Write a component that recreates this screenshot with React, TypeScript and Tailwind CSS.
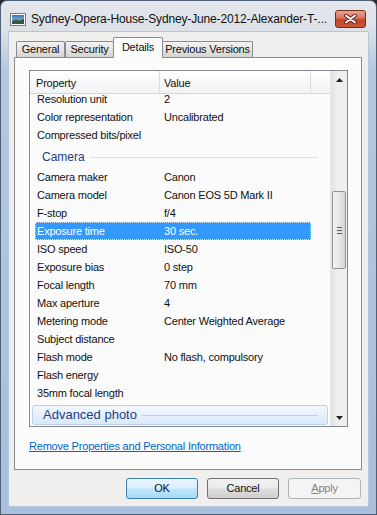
import React from "react";

const general = [
  ["Resolution unit", "2"],
  ["Color representation", "Uncalibrated"],
  ["Compressed bits/pixel", ""],
];

const camera = [
  ["Camera maker", "Canon"],
  ["Camera model", "Canon EOS 5D Mark II"],
  ["F-stop", "f/4"],
  ["Exposure time", "30 sec."],
  ["ISO speed", "ISO-50"],
  ["Exposure bias", "0 step"],
  ["Focal length", "70 mm"],
  ["Max aperture", "4"],
  ["Metering mode", "Center Weighted Average"],
  ["Subject distance", ""],
  ["Flash mode", "No flash, compulsory"],
  ["Flash energy", ""],
  ["35mm focal length", ""],
];

const Row = ({ label, value, selected }: { label: string; value: string; selected?: boolean }) => (
  <div
    className={
      selected
        ? "h-[18px] ml-[5px] w-[276px] flex items-center bg-[#3399ff] text-white border border-dotted border-[#cfe3fb]"
        : "h-[18px] ml-[5px] w-[276px] flex items-center border border-transparent"
    }
  >
    <div className="w-[124px] pl-[1px] whitespace-nowrap">{label}</div>
    <div className="pl-[4px] whitespace-nowrap">{value}</div>
  </div>
);

const Tab = ({ label, active, w }: { label: string; active?: boolean; w: string }) =>
  active ? (
    <div
      className={`${w} h-[21px] -mx-[1px] relative z-10 border border-b-0 border-[#898c95] bg-[#fcfcfc] flex items-center justify-center rounded-t-[2px] mb-[-1px] pb-[2px]`}
    >
      {label}
    </div>
  ) : (
    <div
      className={`${w} h-[16px] border border-b-0 border-[#898c95] bg-gradient-to-b from-[#f3f3f3] to-[#d6d4d0] flex items-center justify-center rounded-t-[2px]`}
    >
      {label}
    </div>
  );

export default function App() {
  return (
    <div className="w-[377px] h-[515px] bg-[#2b2b2b] overflow-hidden font-['Liberation_Sans',Arial,sans-serif] text-[11px] tracking-[-0.2px] text-[#111]">
      <div className="h-full rounded-t-[7px] border border-[#4f6078] bg-[linear-gradient(to_bottom,#e4e7eb_0px,#dde2e8_28px,#b3c7de_70px,#a8c0dc_100%)] flex flex-col px-[7px] pb-[7px]">
        {/* title bar */}
        <div className="h-[30px] flex items-center shrink-0 pt-[6px]">
          <svg width="16" height="13" viewBox="0 0 16 13" className="ml-[2px]">
            <defs>
              <linearGradient id="sky" x1="0" y1="0" x2="0" y2="1">
                <stop offset="0" stopColor="#3d78b4" />
                <stop offset="1" stopColor="#a9d1ee" />
              </linearGradient>
            </defs>
            <rect x="0.5" y="0.5" width="15" height="12" fill="#fff" stroke="#6f7c8a" />
            <rect x="2" y="2" width="12" height="9" fill="url(#sky)" />
            <path d="M2 8 L6 6.5 L9 7.5 L14 6 L14 11 L2 11 Z" fill="#2f5b3c" />
          </svg>
          <div className="ml-[5px] text-[12px] tracking-[-0.15px] text-[#111] whitespace-nowrap">
            Sydney-Opera-House-Sydney-June-2012-Alexander-T-...
          </div>
          <div className="ml-auto mr-[3px] mt-[-1px] w-[31px] h-[18px] rounded-[3px] border border-[#7a2a1a] bg-[linear-gradient(to_bottom,#e8a493_0%,#d8705a_45%,#c0442a_55%,#c9583c_100%)] flex items-center justify-center">
            <svg width="13" height="10" viewBox="0 0 13 10">
              <path d="M2 1.5 L11 8.5 M11 1.5 L2 8.5" stroke="#5a1d12" strokeWidth="3.6" strokeLinecap="round" />
              <path d="M2 1.5 L11 8.5 M11 1.5 L2 8.5" stroke="#fff" strokeWidth="2" strokeLinecap="round" />
            </svg>
          </div>
        </div>

        {/* client area */}
        <div className="flex-1 bg-[#f0efed] border border-[#b4c6db] flex flex-col pl-[5px] pr-[6px] pt-[4px]">
          {/* tabs */}
          <div className="flex items-end h-[21px] pl-[2px]">
            <Tab label="General" w="w-[49px]" />
            <Tab label="Security" w="w-[49px]" />
            <Tab label="Details" w="w-[50px]" active />
            <Tab label="Previous Versions" w="w-[91px]" />
          </div>

          {/* panel */}
          <div className="h-[413px] border border-[#898c95] bg-[#fcfcfc] flex flex-col pl-[14px] pr-[13px] pt-[12px]">
            {/* list view */}
            <div className="h-[357px] border border-[#828790] bg-[#fbfbfb] flex">
              <div className="flex-1 flex flex-col overflow-hidden">
                {/* header */}
                <div className="h-[23px] shrink-0 flex relative z-10 bg-gradient-to-b from-[#ffffff] to-[#f1f2f4] border-b border-[#d5d5d5]">
                  <div className="w-[130px] pl-[6px] pt-[3px] flex items-center border-r border-[#dcdcdc]">Property</div>
                  <div className="w-[151px] pl-[4px] pt-[3px] flex items-center border-r border-[#dcdcdc]">Value</div>
                </div>
                {/* rows */}
                <div className="-mt-[4px]">
                  {general.map(([l, v]) => (
                    <Row key={l} label={l} value={v} />
                  ))}
                  <div className="h-[24px] flex items-center pl-[12px] pt-[2px]">
                    <span className="text-[#1e3c8c] text-[12px] tracking-[0px]">Camera</span>
                    <div className="flex-1 h-px bg-[#dedfe2] ml-[5px] mr-[12px]" />
                  </div>
                  {camera.map(([l, v]) => (
                    <Row key={l} label={l} value={v} selected={l === "Exposure time"} />
                  ))}
                  <div className="h-[24px] pt-[3px] pb-[1px] px-[2px]">
                    <div className="h-full rounded-[3px] border border-[#b9d1ee] bg-gradient-to-b from-[#f3f8fe] to-[#dae8f9] flex items-center pl-[10px]">
                      <span className="text-[#1e3c8c] text-[13px] tracking-[0px]">Advanced photo</span>
                      <div className="flex-1 h-px bg-[#c3cfdd] ml-[5px] mr-[9px]" />
                    </div>
                  </div>
                </div>
              </div>

              {/* scrollbar */}
              <div className="w-[17px] shrink-0 flex flex-col bg-[linear-gradient(to_right,#e2e2e2,#efefef_40%,#f0f0f0)] border-l border-[#e8e8e8]">
                <div className="h-[17px] flex items-center justify-center">
                  <svg width="7" height="4" viewBox="0 0 7 4">
                    <polygon points="3.5,0 7,4 0,4" fill="#222" />
                  </svg>
                </div>
                <div className="h-[103px]" />
                <div className="h-[78px] mx-[1px] rounded-[2px] border border-[#959595] bg-[linear-gradient(to_right,#f3f3f3,#e6e6e6_50%,#d4d4d4)] flex flex-col items-center justify-center gap-[2px]">
                  <div className="w-[5px] h-px bg-[#5d5d5d]" />
                  <div className="w-[5px] h-px bg-[#5d5d5d]" />
                  <div className="w-[5px] h-px bg-[#5d5d5d]" />
                </div>
                <div className="flex-1" />
                <div className="h-[17px] flex items-center justify-center">
                  <svg width="7" height="4" viewBox="0 0 7 4">
                    <polygon points="0,0 7,0 3.5,4" fill="#222" />
                  </svg>
                </div>
              </div>
            </div>

            <div className="mt-[11px] text-[#0066cc] underline whitespace-nowrap">
              Remove Properties and Personal Information
            </div>
          </div>

          {/* buttons */}
          <div className="flex justify-end gap-[9px] mt-[8px] pr-[1px]">
            <div className="w-[72px] h-[21px] rounded-[3px] border border-[#3c7fb1] bg-[linear-gradient(to_bottom,#eaf6fd_0%,#d9f0fc_45%,#bee6fd_55%,#a7d9f5_100%)] flex items-center justify-center">
              OK
            </div>
            <div className="w-[72px] h-[21px] rounded-[3px] border border-[#707070] bg-[linear-gradient(to_bottom,#f2f2f2_0%,#ebebeb_45%,#dddddd_55%,#cfcfcf_100%)] flex items-center justify-center">
              Cancel
            </div>
            <div className="w-[73px] h-[21px] rounded-[3px] border border-[#adb2b5] bg-[#f4f4f4] text-[#838383] flex items-center justify-center">
              <span className="underline">A</span>pply
            </div>
          </div>
        </div>
      </div>
    </div>
  );
}
